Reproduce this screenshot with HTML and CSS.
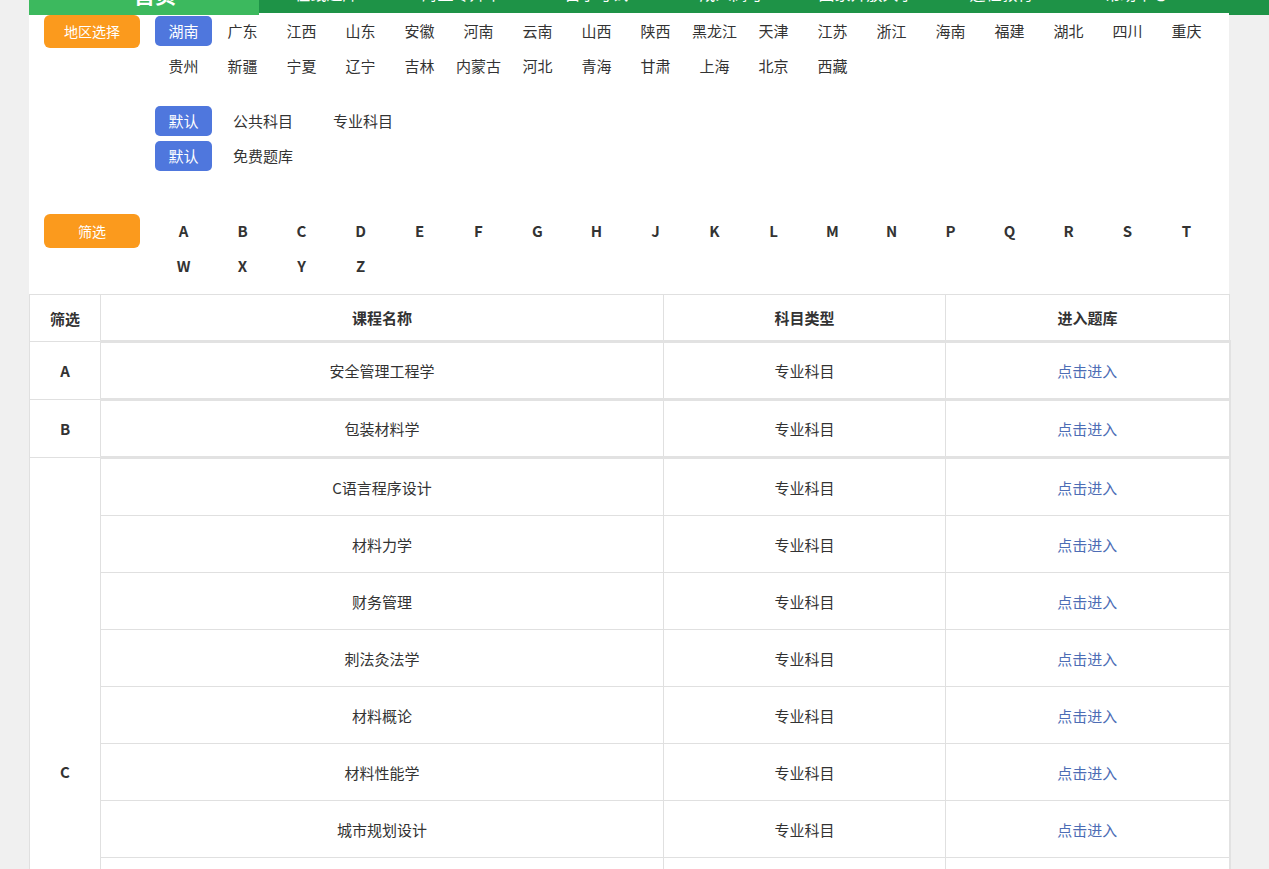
FILE: index.html
```html
<!DOCTYPE html>
<html lang="zh-CN">
<head>
<meta charset="utf-8">
<title>题库</title>
<link rel="stylesheet" href="styles.css">
</head>
<body>
<nav class="nav">
  <a class="active" href="#">首页</a>
  <a href="#">在线题库</a>
  <a href="#">海量专升本</a>
  <a href="#">自学考试</a>
  <a href="#">成人高考</a>
  <a href="#">国家开放大学</a>
  <a href="#">远程教育</a>
  <a href="#">帮助中心</a>
</nav>
<div class="wrap">
  <div class="filter region">
    <span class="tag">地区选择</span>
    <ul class="opts">
      <li class="on"><span>湖南</span></li>
      <li>广东</li><li>江西</li><li>山东</li><li>安徽</li><li>河南</li><li>云南</li><li>山西</li><li>陕西</li><li>黑龙江</li><li>天津</li><li>江苏</li><li>浙江</li><li>海南</li><li>福建</li><li>湖北</li><li>四川</li><li>重庆</li>
      <li>贵州</li><li>新疆</li><li>宁夏</li><li>辽宁</li><li>吉林</li><li>内蒙古</li><li>河北</li><li>青海</li><li>甘肃</li><li>上海</li><li>北京</li><li>西藏</li>
    </ul>
  </div>
  <div class="filter subject">
    <span class="tag blank"></span>
    <div class="sub-rows">
      <ul class="opts sub">
        <li class="on"><span>默认</span></li><li>公共科目</li><li>专业科目</li>
      </ul>
      <ul class="opts sub">
        <li class="on"><span>默认</span></li><li>免费题库</li>
      </ul>
    </div>
  </div>
  <div class="filter letters">
    <span class="tag">筛选</span>
    <ul class="opts bold">
      <li>A</li><li>B</li><li>C</li><li>D</li><li>E</li><li>F</li><li>G</li><li>H</li><li>J</li><li>K</li><li>L</li><li>M</li><li>N</li><li>P</li><li>Q</li><li>R</li><li>S</li><li>T</li>
      <li>W</li><li>X</li><li>Y</li><li>Z</li>
    </ul>
  </div>
  <table class="course">
    <colgroup>
      <col class="c-letter"><col class="c-name"><col class="c-type"><col class="c-link">
    </colgroup>
    <thead>
      <tr><th>筛选</th><th>课程名称</th><th>科目类型</th><th>进入题库</th></tr>
    </thead>
    <tbody>
      <tr class="first"><td class="letter">A</td><td>安全管理工程学</td><td>专业科目</td><td><a href="#">点击进入</a></td></tr>
      <tr class="first"><td class="letter">B</td><td>包装材料学</td><td>专业科目</td><td><a href="#">点击进入</a></td></tr>
      <tr class="first"><td class="letter" rowspan="11">C</td><td>C语言程序设计</td><td>专业科目</td><td><a href="#">点击进入</a></td></tr>
      <tr><td>材料力学</td><td>专业科目</td><td><a href="#">点击进入</a></td></tr>
      <tr><td>财务管理</td><td>专业科目</td><td><a href="#">点击进入</a></td></tr>
      <tr><td>刺法灸法学</td><td>专业科目</td><td><a href="#">点击进入</a></td></tr>
      <tr><td>材料概论</td><td>专业科目</td><td><a href="#">点击进入</a></td></tr>
      <tr><td>材料性能学</td><td>专业科目</td><td><a href="#">点击进入</a></td></tr>
      <tr><td>城市规划设计</td><td>专业科目</td><td><a href="#">点击进入</a></td></tr>
      <tr><td>成本会计</td><td>专业科目</td><td><a href="#">点击进入</a></td></tr>
      <tr><td>传感器与检测技术</td><td>专业科目</td><td><a href="#">点击进入</a></td></tr>
      <tr><td>财务报表分析</td><td>专业科目</td><td><a href="#">点击进入</a></td></tr>
      <tr><td>创新思维</td><td>公共科目</td><td><a href="#">点击进入</a></td></tr>
    </tbody>
  </table>
</div>
</body>
</html>
```

FILE: styles.css
```css
* { box-sizing: border-box; }
body {
  margin: 0;
  background: #f0f0f0;
  font-family: "Noto Sans CJK SC", "Microsoft YaHei", sans-serif;
  color: #333;
}
.nav {
  display: flex;
  height: 40px;
  margin: -25px 0 0 29px;
  background: #1e9347;
  overflow: hidden;
}
.nav a {
  width: 135px;
  flex: none;
  text-align: center;
  line-height: 36px;
  color: #fff;
  font-size: 16px;
  text-decoration: none;
}
.nav a.active {
  width: 230px;
  padding-left: 22px;
  background: #3cb95e;
  font-size: 21px;
  font-weight: bold;
  line-height: 39px;
}
.wrap {
  width: 1200px;
  margin-left: 29px;
  background: #fff;
}
.filter {
  display: flex;
  align-items: flex-start;
  padding-left: 15px;
}
.tag {
  flex: none;
  width: 96px;
  height: 33px;
  line-height: 33px;
  margin-right: 15px;
  border-radius: 6px;
  background: #fb9a1d;
  color: #fff;
  font-size: 14px;
  text-align: center;
}
.tag.blank { background: none; }
.opts {
  list-style: none;
  margin: 0;
  padding: 0;
  display: flex;
  flex-wrap: wrap;
  width: 1074px;
}
.opts li {
  width: 57px;
  margin-right: 2px;
  height: 35px;
  line-height: 35px;
  text-align: center;
  font-size: 15px;
  color: #333;
}
.opts li.on span {
  display: block;
  height: 30px;
  line-height: 30px;
  margin-top: 2.5px;
  border-radius: 5px;
  background: #4f77dd;
  color: #fff;
}
.opts.bold li { font-weight: bold; font-size: 15px; }
.opts.sub li {
  width: auto;
  padding: 0 20px;
  margin: 0;
}
.opts.sub li.on {
  width: 57px;
  padding: 0;
  margin-right: 1px;
}
.region { margin-top: -2px; }
.region .tag { margin-top: 2px; }
.subject { margin-top: 20px; }
.letters { margin-top: 40px; }
.letters .tag { margin-top: 1px; height: 34px; line-height: 34px; }
.course {
  width: 1200px;
  margin-top: 11px;
  border-collapse: collapse;
  table-layout: fixed;
  font-size: 15px;
}
.c-letter { width: 71px; }
.c-name { width: 563px; }
.c-type { width: 282px; }
.c-link { width: 284px; }
.course th, .course td {
  border: 1px solid #e0e0e0;
  text-align: center;
  padding: 0;
}
.course th {
  height: 47px;
  font-weight: bold;
  color: #333;
}
.course td {
  height: 57px;
  color: #333;
}
.course td:last-child { border-right: 2px solid #e2e2e2; }
.course th:last-child { border-right: 1px solid #e0e0e0; }
.course tr.first td { border-top: 3px solid #e2e2e2; height: 58px; }
.course tr.first td.letter { border-top: 1px solid #e0e0e0; }
.course td.letter { font-weight: bold; }
.course a {
  color: #4d6db5;
  text-decoration: none;
}
```
